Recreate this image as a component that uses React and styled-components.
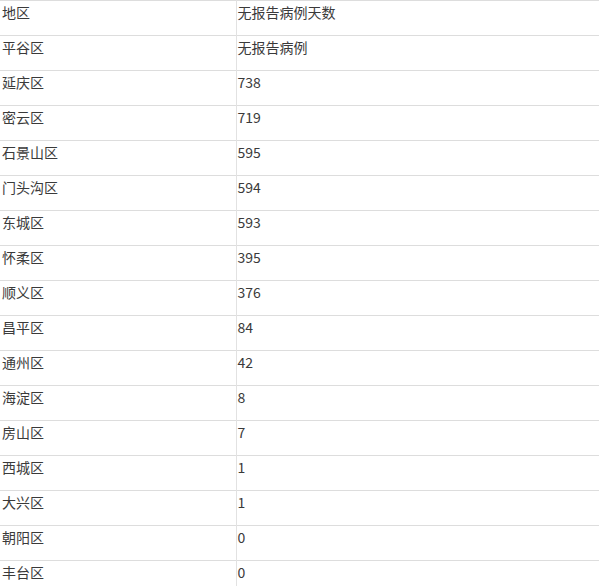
import { createGlobalStyle } from "styled-components";
import styled from "styled-components";

const GlobalStyle = createGlobalStyle`
  body {
    margin: 0;
    background: #fff;
    font-family: "Noto Sans CJK SC", "Noto Sans", sans-serif;
  }
`;

const Table = styled.table`
  width: 599px;
  border-collapse: collapse;
  font-size: 14px;
  color: #3a3a3a;
`;

const Row = styled.tr`
  border-top: 1px solid #ddd;
`;

const Cell = styled.td`
  height: 35px;
  padding: ${(props) => (props.wide ? "1px 0 0 1px" : "1px 0 0 2px")};
  width: ${(props) => (props.wide ? "auto" : "236px")};
  border-left: ${(props) => (props.wide ? "1px solid #e2e2e2" : "none")};
  vertical-align: top;
  line-height: 20px;
  box-sizing: border-box;
`;

const rows = [
  ["地区", "无报告病例天数"],
  ["平谷区", "无报告病例"],
  ["延庆区", "738"],
  ["密云区", "719"],
  ["石景山区", "595"],
  ["门头沟区", "594"],
  ["东城区", "593"],
  ["怀柔区", "395"],
  ["顺义区", "376"],
  ["昌平区", "84"],
  ["通州区", "42"],
  ["海淀区", "8"],
  ["房山区", "7"],
  ["西城区", "1"],
  ["大兴区", "1"],
  ["朝阳区", "0"],
  ["丰台区", "0"],
];

export default function App() {
  return (
    <>
      <GlobalStyle />
      <Table>
        <tbody>
          {rows.map(([area, days], index) => (
            <Row key={index}>
              <Cell>{area}</Cell>
              <Cell wide>{days}</Cell>
            </Row>
          ))}
        </tbody>
      </Table>
    </>
  );
}
